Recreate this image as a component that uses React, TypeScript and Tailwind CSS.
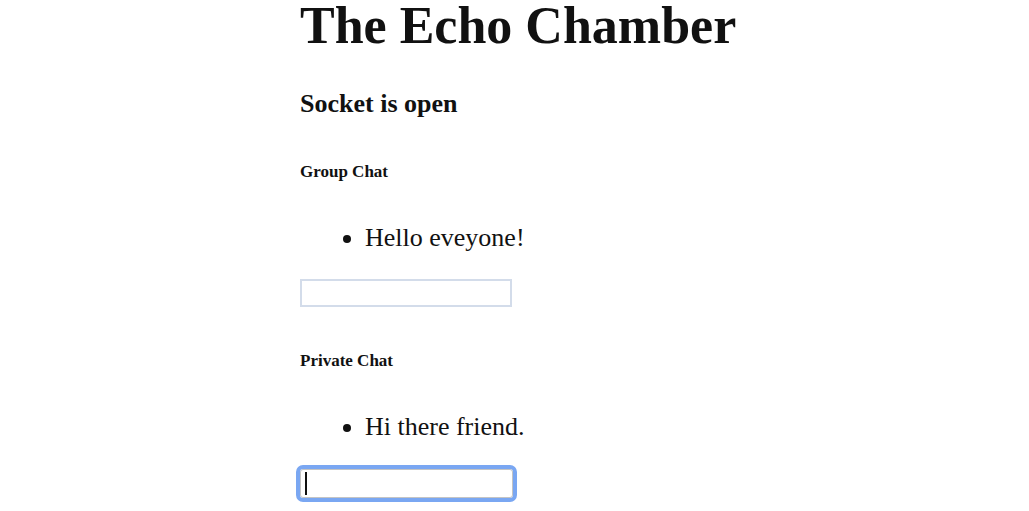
import { useState } from 'react';

const serif = { fontFamily: '"Liberation Serif", "Times New Roman", serif' };

export default function App() {
  const [groupMsg, setGroupMsg] = useState('');
  const [privateMsg, setPrivateMsg] = useState('');

  return (
    <div className="min-h-screen bg-white text-[#111] pl-[300px]" style={serif}>
      <h1 className="text-[52px] leading-[52px] font-bold">The Echo Chamber</h1>

      <h2 className="mt-[39px] text-[26px] leading-[26px] font-bold">Socket is open</h2>

      <h4 className="mt-[46px] text-[17px] leading-[17px] font-bold">Group Chat</h4>
      <ul className="mt-[45px] list-disc pl-[65px] text-[26px] leading-[26px]">
        <li>Hello eveyone!</li>
      </ul>
      <input
        value={groupMsg}
        onChange={(e) => setGroupMsg(e.target.value)}
        className="block mt-[28px] w-[212px] h-[28px] border-2 border-[#d3dcea] bg-white outline-none"
      />

      <h4 className="mt-[45px] text-[17px] leading-[17px] font-bold">Private Chat</h4>
      <ul className="mt-[45px] list-disc pl-[65px] text-[26px] leading-[26px]">
        <li>Hi there friend.</li>
      </ul>
      <div className="relative mt-[29px] w-[213px]">
        <input
          value={privateMsg}
          onChange={(e) => setPrivateMsg(e.target.value)}
          className="block w-[213px] h-[29px] border border-[#c4c4c4] bg-white outline-4 outline-solid outline-[#7aa7f2] rounded-[3px]"
        />
        <span className="absolute left-[5px] top-[3px] w-[2px] h-[23px] bg-[#111]" />
      </div>
    </div>
  );
}
